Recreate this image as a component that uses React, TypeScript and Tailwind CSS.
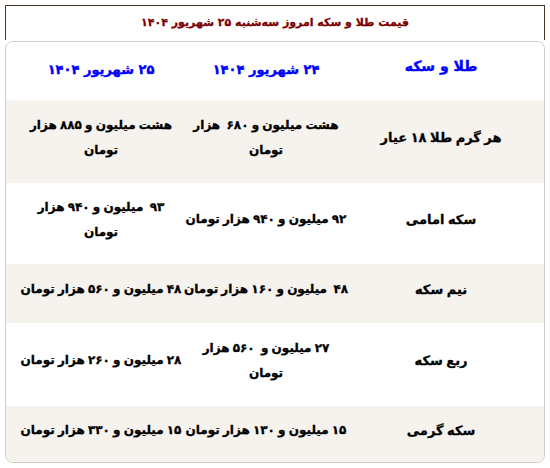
import React from "react";

const rows: { name: string; d24: React.ReactNode; d25: React.ReactNode; bg: string; h: string }[] = [
  {
    name: "هر گرم طلا ۱۸ عیار",
    d24: (<>هشت میلیون و ۶۸۰&nbsp; هزار<br />تومان</>),
    d25: (<>هشت میلیون و ۸۸۵ هزار<br />تومان</>),
    bg: "bg-[#f6f3ee]",
    h: "h-[83px]",
  },
  {
    name: "سکه امامی",
    d24: <>۹۲ میلیون و ۹۴۰ هزار تومان</>,
    d25: (<>۹۳&nbsp; میلیون و ۹۴۰ هزار<br />تومان</>),
    bg: "bg-white",
    h: "h-[81px]",
  },
  {
    name: "نیم سکه",
    d24: <>۴۸&nbsp; میلیون و ۱۶۰ هزار تومان</>,
    d25: <>۴۸ میلیون و ۵۶۰ هزار تومان</>,
    bg: "bg-[#f6f3ee]",
    h: "h-[59px]",
  },
  {
    name: "ربع سکه",
    d24: (<>۲۷ میلیون و&nbsp; ۵۶۰ هزار<br />تومان</>),
    d25: <>۲۸ میلیون و ۲۶۰ هزار تومان</>,
    bg: "bg-white",
    h: "h-[83px]",
  },
  {
    name: "سکه گرمی",
    d24: <>۱۵ میلیون و ۱۳۰ هزار تومان</>,
    d25: <>۱۵ میلیون و ۳۳۰ هزار تومان</>,
    bg: "bg-[#f6f3ee]",
    h: "h-[56px]",
  },
];

export default function App() {
  return (
    <div
      dir="rtl"
      className="w-[550px] h-[468px] bg-white px-[5px] pt-[5px]"
      style={{ fontFamily: '"DejaVu Sans", sans-serif' }}
    >
      <div className="h-[35px] border-t border-x border-[#4b3520] flex items-center justify-center pb-[1px]">
        <span className="text-[11px] font-bold text-[#7a0000] leading-none [-webkit-text-stroke:0.3px]">
          قیمت طلا و سکه امروز سه‌شنبه ۲۵ شهریور ۱۴۰۴
        </span>
      </div>
      <div className="mt-px h-[422px] border border-[#cfcbc6] rounded-[8px] overflow-hidden flex flex-col">
        <div className="grid grid-cols-[202px_152px_1fr] h-[58px] bg-white font-bold text-[#0000ff] [-webkit-text-stroke:0.4px]">
          <div className="flex items-center justify-center pb-[10px] pr-[4px] text-[14px]">طلا و سکه</div>
          <div className="flex items-center justify-center pb-[2px] text-[13px]">۲۴ شهریور ۱۴۰۴</div>
          <div className="flex items-center justify-center pb-[2px] pl-[6px] text-[13px]">۲۵ شهریور ۱۴۰۴</div>
        </div>
        {rows.map((r, i) => (
          <div
            key={i}
            className={`grid grid-cols-[202px_152px_1fr] ${r.h} ${r.bg} text-[12px] font-bold text-black leading-[25px] pb-[8px] [word-spacing:-1px] [-webkit-text-stroke:0.3px]`}
          >
            <div className="flex items-center justify-center text-center pr-[4px] text-[13px]">{r.name}</div>
            <div className="flex items-center justify-center text-center whitespace-nowrap">{r.d24}</div>
            <div className="flex items-center justify-center text-center whitespace-nowrap pl-[6px]">{r.d25}</div>
          </div>
        ))}
      </div>
    </div>
  );
}
